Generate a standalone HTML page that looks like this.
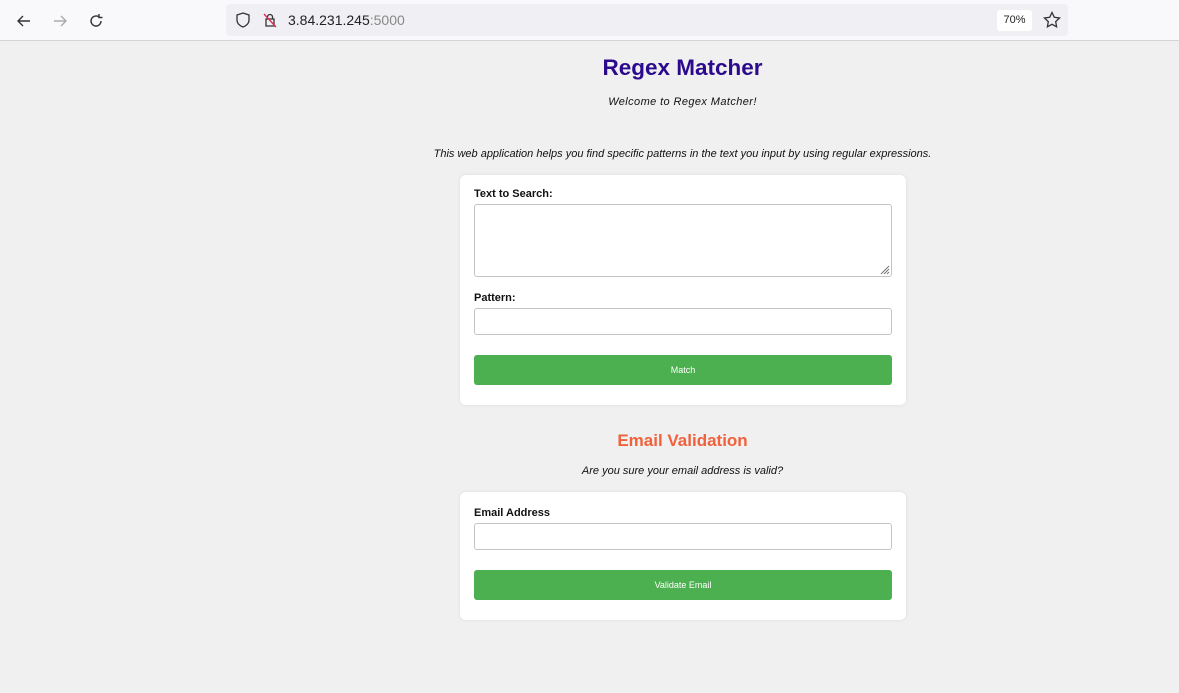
<!DOCTYPE html>
<html><head><meta charset="utf-8"><style>
*{box-sizing:border-box;margin:0;padding:0}
body{width:1179px;height:693px;background:#f0f0f0;font-family:"Liberation Sans",Arial,sans-serif;position:relative;overflow:hidden}
.bar{position:absolute;left:0;top:0;width:1179px;height:41px;background:#f9f9fb;border-bottom:1px solid #d4d4d8}
.url{position:absolute;left:226px;top:4px;width:842px;height:32px;background:#f0f0f4;border-radius:4px}
.ab{position:absolute}
.t{position:absolute;width:100%;text-align:center;left:0}
.card{position:absolute;left:460px;width:446px;background:#fff;border-radius:6px;box-shadow:0 0 4px rgba(0,0,0,.08)}
.lbl{position:absolute;left:474px;font-size:11px;font-weight:bold;color:#111}
.inp{position:absolute;left:474px;width:418px;background:#fff;border:1px solid #c4c4c4;border-radius:3px}
.btn{position:absolute;left:474px;width:418px;background:#4caf50;border-radius:3px;color:#fff;font-size:9px;text-align:center}
</style></head><body>
<div class="bar">
<svg class="ab" style="left:14px;top:11px" width="20" height="20" viewBox="0 0 20 20" fill="none" stroke="#333" stroke-width="1.4"><path d="M16 10H4M9 5L4 10l5 5"/></svg>
<svg class="ab" style="left:50px;top:11px" width="20" height="20" viewBox="0 0 20 20" fill="none" stroke="#aaa" stroke-width="1.4"><path d="M4 10h12M11 5l5 5-5 5"/></svg>
<svg class="ab" style="left:86px;top:11px" width="20" height="20" viewBox="0 0 20 20" fill="none" stroke="#333" stroke-width="1.4"><path d="M15 10a5 5 0 1 1-2-4M13 3v3.5h3.5"/></svg>
<div class="url">
<svg class="ab" style="left:8px;top:7px" width="18" height="18" viewBox="0 0 18 18" fill="none" stroke="#333" stroke-width="1.3"><path d="M9 2l6 2v5c0 3.5-3 6-6 7-3-1-6-3.5-6-7V4z"/></svg>
<svg class="ab" style="left:35px;top:7px" width="18" height="18" viewBox="0 0 18 18" fill="none" stroke-width="1.3"><path stroke="#333" d="M5 8h8v7H5zM6.5 8V6a2.5 2.5 0 0 1 5 0v2"/><path stroke="#e22850" d="M3 3l12 13"/></svg>
<div class="ab" style="left:62px;top:8px;font-size:14px;color:#222">3.84.231.245<span style="color:#888">:5000</span></div>
<div class="ab" style="left:771px;top:6px;width:35px;height:21px;background:#fff;border-radius:3px;font-size:11px;line-height:21px;text-align:center;color:#222">70%</div>
<svg class="ab" style="left:816px;top:6px" width="20" height="20" viewBox="0 0 20 20" fill="none" stroke="#333" stroke-width="1.3"><path d="M10 2.5l2.3 4.8 5.2.7-3.8 3.6.9 5.2-4.6-2.5-4.6 2.5.9-5.2L2.5 8l5.2-.7z"/></svg>
</div></div>
<div class="t" style="left:93px;top:55px;font-size:22.5px;font-weight:bold;color:#2c0a8e">Regex Matcher</div>
<div class="t" style="left:93px;top:96px;font-size:11px;font-style:italic;color:#111;letter-spacing:0.4px">Welcome to Regex Matcher!</div>
<div class="t" style="left:93px;top:148px;font-size:11px;font-style:italic;color:#111">This web application helps you find specific patterns in the text you input by using regular expressions.</div>
<div class="card" style="top:175px;height:230px"></div>
<div class="lbl" style="top:188px">Text to Search:</div>
<div class="inp" style="top:204px;height:73px"><svg class="ab" style="right:1px;bottom:1px" width="12" height="12" viewBox="0 0 12 12" stroke="#777" stroke-width="1"><path d="M11 3L3 11M11 6L6 11M11 9L9 11"/></svg></div>
<div class="lbl" style="top:292px">Pattern:</div>
<div class="inp" style="top:308px;height:27px"></div>
<div class="btn" style="top:355px;height:30px;line-height:30px">Match</div>
<div class="t" style="left:93px;top:431px;font-size:17px;font-weight:bold;color:#f0613c">Email Validation</div>
<div class="t" style="left:93px;top:465px;font-size:11px;font-style:italic;color:#111">Are you sure your email address is valid?</div>
<div class="card" style="top:492px;height:128px"></div>
<div class="lbl" style="top:507px">Email Address</div>
<div class="inp" style="top:523px;height:27px"></div>
<div class="btn" style="top:570px;height:30px;line-height:30px">Validate Email</div>
</body></html>
